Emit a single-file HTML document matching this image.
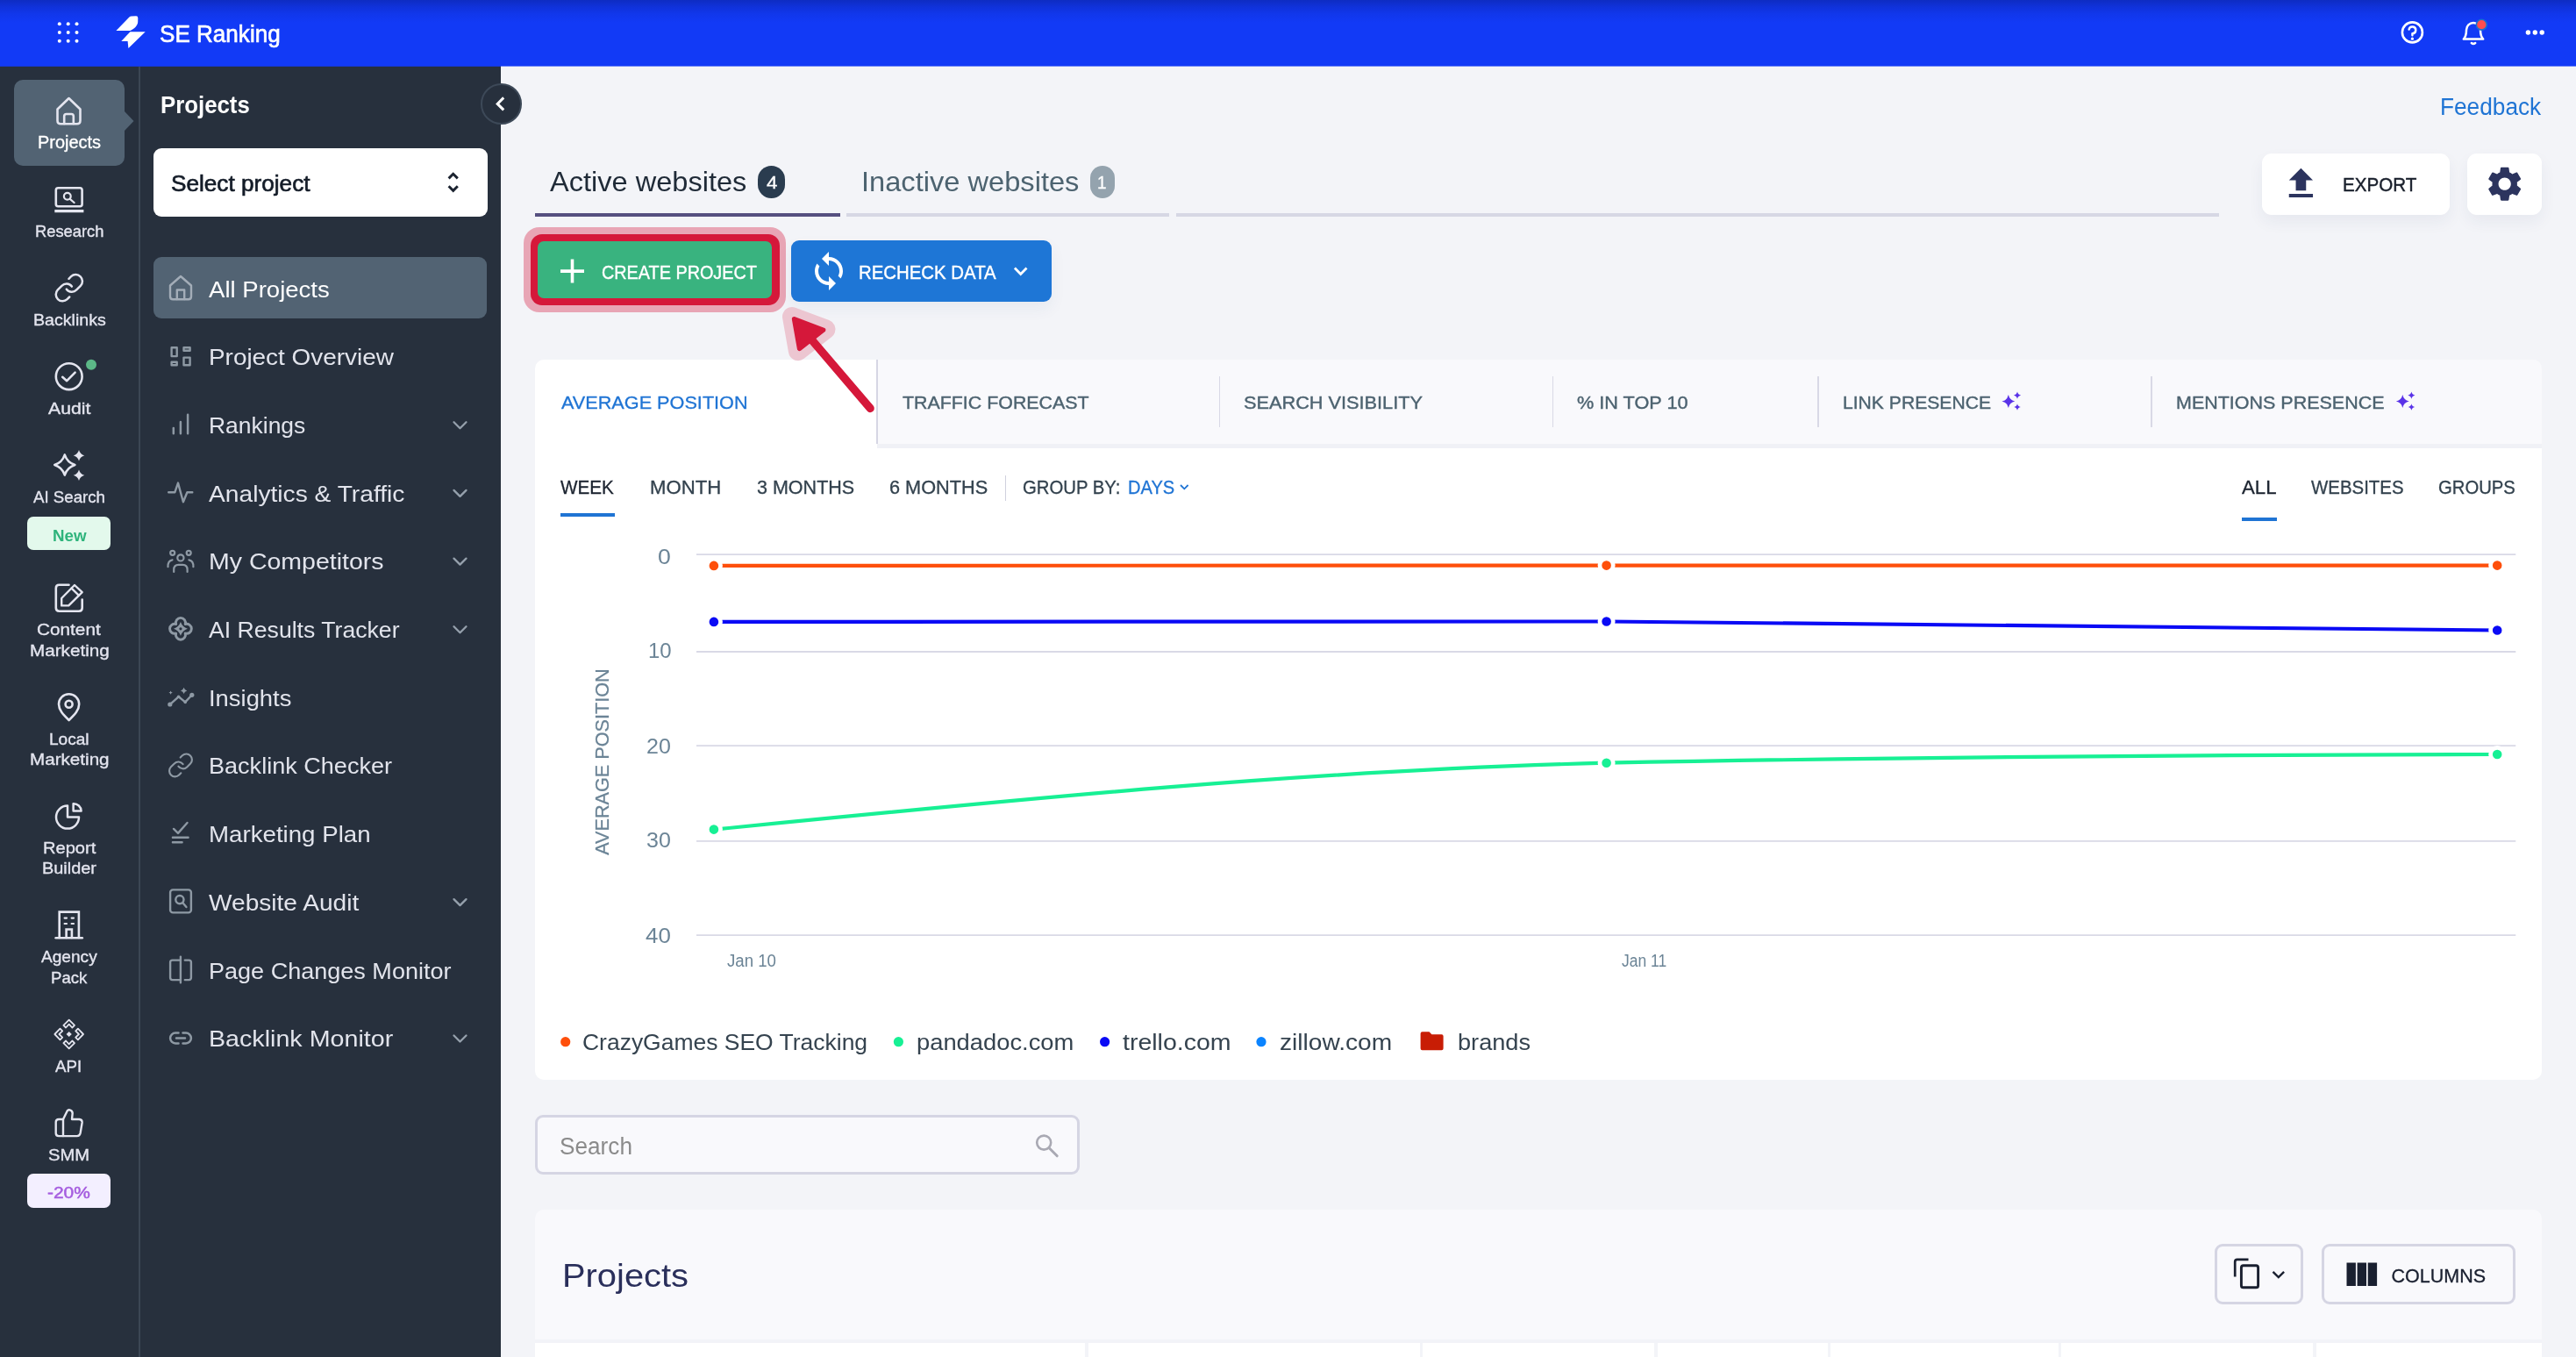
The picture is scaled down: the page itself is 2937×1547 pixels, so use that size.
<!DOCTYPE html><html><head><meta charset="utf-8"><title>SE Ranking - Projects</title><style>
html,body{margin:0;padding:0}body{width:2937px;height:1547px;position:relative;overflow:hidden;background:#f3f4f8;font-family:"Liberation Sans", sans-serif}
.t{position:absolute;white-space:nowrap;line-height:1;transform-origin:0 0}
#pg{position:absolute;left:0;top:0;width:100%;height:100%;will-change:transform}
</style></head><body><div id="pg">
<div style="position:absolute;left:0px;top:0px;width:2937px;height:75px;background:#123af6;border-radius:0px;background:linear-gradient(to bottom,#0e2cc2 0px,#1032da 8px,#1137eb 16px,#123af6 26px,#123af6 100%);"></div>
<div style="position:absolute;left:0px;top:75px;width:571px;height:1px;background:#1738d0;border-radius:0px;"></div>
<div style="position:absolute;left:571px;top:75px;width:2366px;height:1px;background:#6f86f6;border-radius:0px;"></div>
<svg style="position:absolute;left:0px;top:0px;" width="120" height="76" viewBox="0 0 120 76" fill="none"><circle cx="67.8" cy="27.3" r="2" fill="#fff"/><circle cx="67.8" cy="36.9" r="2" fill="#fff"/><circle cx="67.8" cy="46.8" r="2" fill="#fff"/><circle cx="77.7" cy="27.3" r="2" fill="#fff"/><circle cx="77.7" cy="36.9" r="2" fill="#fff"/><circle cx="77.7" cy="46.8" r="2" fill="#fff"/><circle cx="87.5" cy="27.3" r="2" fill="#fff"/><circle cx="87.5" cy="36.9" r="2" fill="#fff"/><circle cx="87.5" cy="46.8" r="2" fill="#fff"/></svg>
<svg style="position:absolute;left:0px;top:0px;" width="200" height="76" viewBox="0 0 200 76" fill="none"><path d="M132.4,34.9 L147.4,19.4 Q148.4,18.5 149.8,18.5 L155.2,18.3 Q157.3,18.3 157.3,20.4 L157.2,25 C157.2,29 152.6,33.6 148.4,34.9 Z" fill="#fff"/><path d="M165.7,36.2 L148.4,36.2 L138.3,46.9 L145.6,47.1 L146.4,54.9 Z" fill="#fff"/></svg>
<div style="position:absolute;left:0px;top:76px;width:571px;height:1471px;background:#27303d;border-radius:0px;"></div>
<div style="position:absolute;left:157.5px;top:76px;width:2px;height:1471px;background:#3b4654;border-radius:0px;"></div>
<div style="position:absolute;left:15.5px;top:91px;width:126.5px;height:97.5px;background:#526373;border-radius:10px;"></div>
<svg style="position:absolute;left:141px;top:126px;" width="14" height="24" viewBox="0 0 14 24" fill="none"><path d="M0,0 L11.5,12 L0,24 Z" fill="#526373"/></svg>
<svg style="position:absolute;left:0px;top:0px;" width="158" height="1547" viewBox="0 0 158 1547" fill="none"><g stroke="#e4e5ef" stroke-width="2.6" stroke-linecap="round" stroke-linejoin="round" fill="none" ><path d="M65.5,124.5 L78.5,112 L91.5,124.5 L91.5,137.5 Q91.5,141.3 87.7,141.3 L69.3,141.3 Q65.5,141.3 65.5,137.5 Z"/><path d="M73.2,141 L73.2,132.5 Q73.2,130 75.7,130 L81.3,130 Q83.8,130 83.8,132.5 L83.8,141"/></g><g stroke="#e4e5ef" stroke-width="2.6" stroke-linecap="round" stroke-linejoin="round" fill="none" ><rect x="63.8" y="214.3" width="29.8" height="21" rx="2.5"/><path d="M62.3,240.6 L95.4,240.6" stroke-width="3.2" stroke-linecap="butt"/></g><g stroke="#e4e5ef" stroke-width="2.2" stroke-linecap="round" stroke-linejoin="round" fill="none" ><circle cx="76.8" cy="223.8" r="3.9"/><path d="M79.8,226.9 L84.6,231"/></g><g transform="translate(60.6,309.9) scale(1.52)"><g stroke="#e4e5ef" stroke-width="1.65" stroke-linecap="round" stroke-linejoin="round" fill="none" ><path d="M10 13a5 5 0 0 0 7.54.54l3-3a5 5 0 0 0-7.07-7.07l-1.72 1.71"/><path d="M14 11a5 5 0 0 0-7.54-.54l-3 3a5 5 0 0 0 7.07 7.07l1.71-1.71"/></g></g><g stroke="#e4e5ef" stroke-width="2.6" stroke-linecap="round" stroke-linejoin="round" fill="none" ><circle cx="78.7" cy="429.2" r="14.9"/><path d="M71.2,429.8 L76.2,434.2 L85.6,424.6"/></g><circle cx="104" cy="415.7" r="6" fill="#5cb887"/><g stroke="#e4e5ef" stroke-width="2.5" stroke-linecap="round" stroke-linejoin="round" fill="none" ><path d="M73.8,518.4 Q76.584,527.216 85.39999999999999,530 Q76.584,532.784 73.8,541.6 Q71.01599999999999,532.784 62.199999999999996,530 Q71.01599999999999,527.216 73.8,518.4 Z"/></g><path d="M90,513.0 Q91.386,517.914 96.3,519.3 Q91.386,520.6859999999999 90,525.5999999999999 Q88.614,520.6859999999999 83.7,519.3 Q88.614,517.914 90,513.0 Z" fill="#e4e5ef"/><path d="M90,535.4000000000001 Q91.386,540.3140000000001 96.3,541.7 Q91.386,543.086 90,548.0 Q88.614,543.086 83.7,541.7 Q88.614,540.3140000000001 90,535.4000000000001 Z" fill="#e4e5ef"/><g stroke="#e4e5ef" stroke-width="2.6" stroke-linecap="round" stroke-linejoin="round" fill="none" ><path d="M78.5,666.8 L67.5,666.8 Q63.8,666.8 63.8,670.5 L63.8,693 Q63.8,696.7 67.5,696.7 L90,696.7 Q93.7,696.7 93.7,693 L93.7,683.5"/></g><g stroke="#e4e5ef" stroke-width="2.4" stroke-linecap="round" stroke-linejoin="round" fill="none" ><path d="M85,667 L93.7,675.2 L78.3,690.4 L70.2,690.4 L70.2,682 Z"/><path d="M81.5,670.6 L90,678.8"/></g><g stroke="#e4e5ef" stroke-width="2.6" stroke-linecap="round" stroke-linejoin="round" fill="none" ><path d="M78.6,821 C72,814.5 67,809.5 67,802.8 A11.6,11.6 0 0 1 90.2,802.8 C90.2,809.5 85.2,814.5 78.6,821 Z"/><circle cx="78.6" cy="802.7" r="4"/></g><g stroke="#e4e5ef" stroke-width="2.5" stroke-linecap="round" stroke-linejoin="round" fill="none" ><path d="M77,918.6 A13,13 0 1 0 90,931.6 L77,931.6 Z"/><path d="M83.6,916.2 A8.6,8.6 0 0 1 92.6,924.6 L83.6,924.6 Z"/></g><g stroke="#e4e5ef" stroke-width="2.6" stroke-linecap="round" stroke-linejoin="round" fill="none" ><path d="M67.7,1069 L67.7,1039.6 L89.9,1039.6 L89.9,1069" stroke-linejoin="miter"/><path d="M63.6,1069.3 L93.8,1069.3"/><path d="M75.6,1069 L75.6,1059.5 L81.9,1059.5 L81.9,1069" stroke-linejoin="miter"/></g><g stroke="#e4e5ef" stroke-width="2.2" stroke-linecap="round" stroke-linejoin="round" fill="none" ><path d="M73.6,1046.6 L76,1046.6 M81.6,1046.6 L84,1046.6 M73.6,1053 L76,1053 M81.6,1053 L84,1053"/></g><g stroke="#e4e5ef" stroke-width="1.8" stroke-linecap="round" stroke-linejoin="round" fill="none" stroke-linejoin="miter"><path transform="translate(78.7,1179) rotate(0)" d="M0,-16.3 L6.3,-10.2 L3.6,-7.5 L0,-11.3 L-3.6,-7.5 L-6.3,-10.2 Z"/><path transform="translate(78.7,1179) rotate(90)" d="M0,-16.3 L6.3,-10.2 L3.6,-7.5 L0,-11.3 L-3.6,-7.5 L-6.3,-10.2 Z"/><path transform="translate(78.7,1179) rotate(180)" d="M0,-16.3 L6.3,-10.2 L3.6,-7.5 L0,-11.3 L-3.6,-7.5 L-6.3,-10.2 Z"/><path transform="translate(78.7,1179) rotate(270)" d="M0,-16.3 L6.3,-10.2 L3.6,-7.5 L0,-11.3 L-3.6,-7.5 L-6.3,-10.2 Z"/></g><path d="M78.7,1175.9 L81.8,1179 L78.7,1182.1 L75.6,1179 Z" fill="#e4e5ef"/><g stroke="#e4e5ef" stroke-width="2.4" stroke-linecap="round" stroke-linejoin="round" fill="none" ><path d="M72,1276 L67,1276 Q63.7,1276 63.7,1279.3 L63.7,1291.8 Q63.7,1295.1 67,1295.1 L72,1295.1 Z"/><path d="M72,1276 L76.8,1266.2 Q77.8,1264.8 79.5,1265.3 Q83.2,1266.4 82.6,1270 L82,1276 L90.5,1276 Q94,1276.4 93.6,1280 L91.6,1291.8 Q90.9,1295.1 87.8,1295.1 L72,1295.1"/></g></svg>
<div style="position:absolute;left:31px;top:588.6px;width:95.1px;height:38.9px;background:#e3f9ec;border-radius:7px;"></div>
<div style="position:absolute;left:31.2px;top:1338.1px;width:94.9px;height:39px;background:#f3efff;border-radius:7px;"></div>
<div style="position:absolute;left:175px;top:169px;width:380.5px;height:78px;background:#ffffff;border-radius:9px;"></div>
<svg style="position:absolute;left:500px;top:190px;" width="32" height="36" viewBox="0 0 32 36" fill="none"><path d="M11.6,13.4 L16.7,8.3 L21.8,13.4 M11.6,22.3 L16.7,27.4 L21.8,22.3" stroke="#1b2330" stroke-width="2.9" fill="none"/></svg>
<div style="position:absolute;left:175.2px;top:293px;width:380.3px;height:70px;background:#526373;border-radius:9px;"></div>
<svg style="position:absolute;left:0px;top:0px;" width="571" height="1547" viewBox="0 0 571 1547" fill="none"><g stroke="#95a0ac" stroke-width="2.3" stroke-linecap="round" stroke-linejoin="round" fill="none" ><path d="M517.5,481.2 L524.5,488.2 L531.5,481.2"/></g><g stroke="#95a0ac" stroke-width="2.3" stroke-linecap="round" stroke-linejoin="round" fill="none" ><path d="M517.5,558.9000000000001 L524.5,565.9000000000001 L531.5,558.9000000000001"/></g><g stroke="#95a0ac" stroke-width="2.3" stroke-linecap="round" stroke-linejoin="round" fill="none" ><path d="M517.5,636.6000000000001 L524.5,643.6000000000001 L531.5,636.6000000000001"/></g><g stroke="#95a0ac" stroke-width="2.3" stroke-linecap="round" stroke-linejoin="round" fill="none" ><path d="M517.5,714.3000000000001 L524.5,721.3000000000001 L531.5,714.3000000000001"/></g><g stroke="#95a0ac" stroke-width="2.3" stroke-linecap="round" stroke-linejoin="round" fill="none" ><path d="M517.5,1025.1000000000001 L524.5,1032.1000000000001 L531.5,1025.1000000000001"/></g><g stroke="#95a0ac" stroke-width="2.3" stroke-linecap="round" stroke-linejoin="round" fill="none" ><path d="M517.5,1180.5000000000002 L524.5,1187.5000000000002 L531.5,1180.5000000000002"/></g><g stroke="#a3adb8" stroke-width="2.4" stroke-linecap="round" stroke-linejoin="round" fill="none" ><path d="M194,325.5 L206,315 L218,325.5 L218,338 Q218,341.3 214.7,341.3 L197.3,341.3 Q194,341.3 194,338 Z"/><path d="M201.8,341 L201.8,330.5 L210.2,330.5 L210.2,341"/></g><g stroke="#8e99a4" stroke-width="2.4" stroke-linecap="round" stroke-linejoin="round" fill="none" stroke-linejoin="miter"><rect x="195.6" y="396.2" width="6.1" height="9.9"/><rect x="209.5" y="396.2" width="7.1" height="3.5"/><rect x="195.6" y="412.7" width="6.1" height="3.6"/><rect x="209.5" y="407.6" width="7.1" height="8.7"/></g><g stroke="#8e99a4" stroke-width="2.5" stroke-linecap="round" stroke-linejoin="round" fill="none" ><path d="M197.8,494.3 L197.8,488 M205.9,494.3 L205.9,481 M214.1,494.3 L214.1,472.8"/></g><g stroke="#8e99a4" stroke-width="2.4" stroke-linecap="round" stroke-linejoin="round" fill="none" ><path d="M192.2,561.3 L199.3,561.3 L203,550.6 L208.9,572.2 L213.4,561.3 L219.3,561.3"/></g><g stroke="#8e99a4" stroke-width="2.2" stroke-linecap="round" stroke-linejoin="round" fill="none" ><circle cx="205.9" cy="635.9" r="3.6"/><path d="M198.2,652 L198.2,649.5 Q198.2,643.8 203.5,643.8 L208.3,643.8 Q213.6,643.8 213.6,649.5 L213.6,652"/><circle cx="196.7" cy="630.3" r="2.5"/><circle cx="215.2" cy="630.3" r="2.5"/><path d="M191.5,646.2 Q191.2,639.2 196.5,638.3 M220.4,646.2 Q220.7,639.2 215.4,638.3"/></g><g stroke="#8e99a4" stroke-width="2.9" stroke-linecap="round" stroke-linejoin="round" fill="none" ><path d="M200.70499999999998,711.555 A5.5,5.5 0 1 1 211.195,711.555 A5.5,5.5 0 1 1 211.195,722.045 A5.5,5.5 0 1 1 200.70499999999998,722.045 A5.5,5.5 0 1 1 200.70499999999998,711.555 Z"/></g><path d="M205.95,708.9 Q208.083,714.6669999999999 213.85,716.8 Q208.083,718.933 205.95,724.6999999999999 Q203.81699999999998,718.933 198.04999999999998,716.8 Q203.81699999999998,714.6669999999999 205.95,708.9 Z" fill="#8e99a4"/><circle cx="205.95" cy="716.8" r="1.6" fill="#27303d"/><g stroke="#8e99a4" stroke-width="2.4" stroke-linecap="round" stroke-linejoin="round" fill="none" ><path d="M194,802.8 L203.6,794.3 L211.2,800.4 L218.6,792.5"/></g><circle cx="193.8" cy="803" r="2.6" fill="#8e99a4"/><circle cx="218.8" cy="792.3" r="2.6" fill="#8e99a4"/><circle cx="203.6" cy="794.3" r="1.8" fill="#8e99a4"/><circle cx="211.2" cy="800.4" r="1.8" fill="#8e99a4"/><path d="M209.6,783.8 Q210.32,786.68 213.2,787.4 Q210.32,788.12 209.6,791.0 Q208.88,788.12 206.0,787.4 Q208.88,786.68 209.6,783.8 Z" fill="#8e99a4"/><path d="M194.6,787.4 Q195.04,789.16 196.79999999999998,789.6 Q195.04,790.0400000000001 194.6,791.8000000000001 Q194.16,790.0400000000001 192.4,789.6 Q194.16,789.16 194.6,787.4 Z" fill="#8e99a4"/><g transform="translate(190.4,856.8) scale(1.3)"><g stroke="#8e99a4" stroke-width="1.65" stroke-linecap="round" stroke-linejoin="round" fill="none" ><path d="M10 13a5 5 0 0 0 7.54.54l3-3a5 5 0 0 0-7.07-7.07l-1.72 1.71"/><path d="M14 11a5 5 0 0 0-7.54-.54l-3 3a5 5 0 0 0 7.07 7.07l1.71-1.71"/></g></g><g stroke="#8e99a4" stroke-width="2.4" stroke-linecap="round" stroke-linejoin="round" fill="none" ><path d="M198,944.9 L203,949.9 L213.5,938"/><path d="M196.9,954.8 L214.6,954.8 M196.9,960.3 L207.6,960.3"/></g><g stroke="#8e99a4" stroke-width="2.4" stroke-linecap="round" stroke-linejoin="round" fill="none" ><rect x="194.1" y="1014.4" width="23.8" height="26" rx="3"/><circle cx="204.9" cy="1025.6" r="4.6"/><path d="M208.4,1029.3 L212.4,1034"/></g><g stroke="#8e99a4" stroke-width="2.4" stroke-linecap="round" stroke-linejoin="round" fill="none" ><path d="M205.9,1094.6 L196.6,1094.6 Q194.1,1094.6 194.1,1097.1 L194.1,1114.6 Q194.1,1117.1 196.6,1117.1 L205.9,1117.1 M205.9,1090.6 L205.9,1120.2 M210.8,1094.6 L215.4,1094.6 Q217.9,1094.6 217.9,1097.1 L217.9,1114.6 Q217.9,1117.1 215.4,1117.1 L210.8,1117.1"/></g><g stroke="#8e99a4" stroke-width="2.5" stroke-linecap="round" stroke-linejoin="round" fill="none" ><path d="M203.5,1177.6 L200,1177.6 A5.9,5.9 0 0 0 200,1189.4 L203.5,1189.4 M208.5,1177.6 L212,1177.6 A5.9,5.9 0 0 1 212,1189.4 L208.5,1189.4 M201,1183.5 L211,1183.5"/></g></svg>
<div style="position:absolute;left:548px;top:95px;width:42.7px;height:42.7px;border-radius:50%;background:#27303d;border:2px solid #3d4958;"></div>
<svg style="position:absolute;left:0px;top:0px;" width="620" height="160" viewBox="0 0 620 160" fill="none"><path d="M574.2,111.4 L567.2,118.4 L574.2,125.4" stroke="#fff" stroke-width="3" fill="none"/></svg>
<div style="position:absolute;left:864.2px;top:188.5px;width:31.2px;height:37.3px;background:#2a3c4f;border-radius:15.6px;"></div>
<div style="position:absolute;left:1243.2px;top:188.5px;width:28.2px;height:37.3px;background:#94a3ae;border-radius:14.1px;"></div>
<div style="position:absolute;left:609.7px;top:242.6px;width:347.9px;height:4.2px;background:#565080;border-radius:0px;"></div>
<div style="position:absolute;left:965px;top:242.6px;width:368px;height:4.2px;background:#d6d7e4;border-radius:0px;"></div>
<div style="position:absolute;left:1341px;top:242.6px;width:1189px;height:4.2px;background:#d6d7e4;border-radius:0px;"></div>
<div style="position:absolute;left:2578.7px;top:175px;width:214.3px;height:70px;background:#ffffff;border-radius:11px;box-shadow:0 8px 18px rgba(40,50,100,0.06);"></div>
<svg style="position:absolute;left:2599.8px;top:186.2px;" width="46.8" height="46.8" viewBox="0 0 24 24" fill="none"><path d="M9 16h6v-6h4l-7-7-7 7h4zm-4 2h14v2H5z" fill="#2c345e"/></svg>
<div style="position:absolute;left:2812.6px;top:175px;width:85px;height:70px;background:#ffffff;border-radius:11px;box-shadow:0 8px 18px rgba(40,50,100,0.06);"></div>
<svg style="position:absolute;left:2831.7px;top:186.0px;" width="47.4" height="47.4" viewBox="0 0 24 24" fill="none"><path d="M19.14,12.94c0.04-0.3,0.06-0.61,0.06-0.94c0-0.32-0.02-0.64-0.07-0.94l2.03-1.58c0.18-0.14,0.23-0.41,0.12-0.61 l-1.92-3.32c-0.12-0.22-0.37-0.29-0.59-0.22l-2.39,0.96c-0.5-0.38-1.03-0.7-1.62-0.94L14.4,2.81c-0.04-0.24-0.24-0.41-0.48-0.41 h-3.84c-0.24,0-0.43,0.17-0.47,0.41L9.25,5.35C8.66,5.59,8.12,5.92,7.63,6.29L5.24,5.33c-0.22-0.08-0.47,0-0.59,0.22L2.74,8.87 C2.62,9.08,2.66,9.34,2.86,9.48l2.03,1.58C4.84,11.36,4.8,11.69,4.8,12s0.02,0.64,0.07,0.94l-2.03,1.58 c-0.18,0.14-0.23,0.41-0.12,0.61l1.92,3.32c0.12,0.22,0.37,0.29,0.59,0.22l2.39-0.96c0.5,0.38,1.03,0.7,1.62,0.94l0.36,2.54 c0.05,0.24,0.24,0.41,0.48,0.41h3.84c0.24,0,0.44-0.17,0.47-0.41l0.36-2.54c0.59-0.24,1.13-0.56,1.62-0.94l2.39,0.96 c0.22,0.08,0.47,0,0.59-0.22l1.92-3.32c0.12-0.22,0.07-0.47-0.12-0.61L19.14,12.94z M12,15.6c-1.98,0-3.6-1.62-3.6-3.6 s1.62-3.6,3.6-3.6s3.6,1.62,3.6,3.6S13.98,15.6,12,15.6z" fill="#2c345e"/></svg>
<div style="position:absolute;left:596.9px;top:258.6px;width:299.1px;height:97.7px;background:#e8a5b5;border-radius:18px;"></div>
<div style="position:absolute;left:604.8px;top:266.8px;width:283.8px;height:81.5px;background:#d5183a;border-radius:13px;"></div>
<div style="position:absolute;left:613px;top:275px;width:267.1px;height:65.1px;background:#39b37f;border-radius:7px;"></div>
<svg style="position:absolute;left:632px;top:289px;" width="40" height="40" viewBox="0 0 40 40" fill="none"><path d="M20.5,6.6 L20.5,33.6 M7,20.1 L34,20.1" stroke="#fff" stroke-width="3.6"/></svg>
<div style="position:absolute;left:902.2px;top:274px;width:296.4px;height:69.9px;background:#1e76d6;border-radius:9px;box-shadow:0 8px 18px rgba(30,60,120,0.06);"></div>
<svg style="position:absolute;left:920.8px;top:285.2px;" width="48" height="48" viewBox="0 0 24 24" fill="none"><path d="M12 4V1L8 5l4 4V6c3.31 0 6 2.69 6 6 0 1.01-.25 1.97-.7 2.8l1.46 1.46C19.54 15.03 20 13.57 20 12c0-4.42-3.58-8-8-8zm0 14c-3.31 0-6-2.69-6-6 0-1.01.25-1.97.7-2.8L5.24 7.74C4.46 8.97 4 10.43 4 12c0 4.42 3.58 8 8 8v3l4-4-4-4v3z" fill="#fff"/></svg>
<svg style="position:absolute;left:1150px;top:296px;" width="28" height="26" viewBox="0 0 28 26" fill="none"><path d="M6.9,9.6 L13.7,16.6 L20.5,9.6" stroke="#fff" stroke-width="2.8" fill="none"/></svg>
<div style="position:absolute;left:609.8px;top:409.7px;width:2288px;height:821px;background:#ffffff;border-radius:10px;"></div>
<div style="position:absolute;left:1000.4px;top:409.7px;width:1897.4px;height:101px;background:#f0f1f6;border-radius:0px;border-radius:0 10px 0 0;"></div>
<div style="position:absolute;left:1000.4px;top:409.7px;width:1897.4px;height:96.8px;background:#f9f9fc;border-radius:0px;border-radius:0 10px 0 0;"></div>
<div style="position:absolute;left:999.4px;top:409.7px;width:2px;height:96.8px;background:#d6d6e4;border-radius:0px;"></div>
<div style="position:absolute;left:1389.5px;top:429.3px;width:1.6px;height:58.2px;background:#d9d9e6;border-radius:0px;"></div>
<div style="position:absolute;left:1769.5px;top:429.3px;width:1.6px;height:58.2px;background:#d9d9e6;border-radius:0px;"></div>
<div style="position:absolute;left:2072.0px;top:429.3px;width:1.6px;height:58.2px;background:#d9d9e6;border-radius:0px;"></div>
<div style="position:absolute;left:2452.3999999999996px;top:429.3px;width:1.6px;height:58.2px;background:#d9d9e6;border-radius:0px;"></div>
<svg style="position:absolute;left:0px;top:0px;pointer-events:none;" width="2937" height="520" viewBox="0 0 2937 520" fill="none"><path d="M2289.9,450.1 Q2291.158,456.242 2297.3,457.5 Q2291.158,458.758 2289.9,464.9 Q2288.6420000000003,458.758 2282.5,457.5 Q2288.6420000000003,456.242 2289.9,450.1 Z" fill="#5a33e8"/><path d="M2300.0,446.59999999999997 Q2300.697,450.003 2304.1,450.7 Q2300.697,451.397 2300.0,454.8 Q2299.303,451.397 2295.9,450.7 Q2299.303,450.003 2300.0,446.59999999999997 Z" fill="#5a33e8"/><path d="M2300.0,460.2 Q2300.646,463.354 2303.8,464.0 Q2300.646,464.646 2300.0,467.8 Q2299.354,464.646 2296.2,464.0 Q2299.354,463.354 2300.0,460.2 Z" fill="#5a33e8"/></svg>
<svg style="position:absolute;left:0px;top:0px;pointer-events:none;" width="2937" height="520" viewBox="0 0 2937 520" fill="none"><path d="M2739.3,450.1 Q2740.558,456.242 2746.7000000000003,457.5 Q2740.558,458.758 2739.3,464.9 Q2738.0420000000004,458.758 2731.9,457.5 Q2738.0420000000004,456.242 2739.3,450.1 Z" fill="#5a33e8"/><path d="M2749.4,446.59999999999997 Q2750.097,450.003 2753.5,450.7 Q2750.097,451.397 2749.4,454.8 Q2748.703,451.397 2745.3,450.7 Q2748.703,450.003 2749.4,446.59999999999997 Z" fill="#5a33e8"/><path d="M2749.4,460.2 Q2750.0460000000003,463.354 2753.2000000000003,464.0 Q2750.0460000000003,464.646 2749.4,467.8 Q2748.754,464.646 2745.6,464.0 Q2748.754,463.354 2749.4,460.2 Z" fill="#5a33e8"/></svg>
<div style="position:absolute;left:639.1px;top:584.5px;width:62px;height:4.2px;background:#1f74d4;border-radius:0px;"></div>
<div style="position:absolute;left:1145.8px;top:542px;width:1.6px;height:28.6px;background:#d0d1de;border-radius:0px;"></div>
<svg style="position:absolute;left:1341px;top:545px;" width="20" height="20" viewBox="0 0 20 20" fill="none"><path d="M5,8 L9.3,12.3 L13.6,8" stroke="#1f74d4" stroke-width="1.8" fill="none"/></svg>
<div style="position:absolute;left:2556px;top:589.8px;width:39.5px;height:4.4px;background:#1f74d4;border-radius:0px;"></div>
<svg style="position:absolute;left:0px;top:0px;pointer-events:none;" width="2937" height="1547" viewBox="0 0 2937 1547" fill="none"><path d="M794,632.2 L2868.3,632.2" stroke="#d9d9e6" stroke-width="1.8"/><path d="M794,743 L2868.3,743" stroke="#d9d9e6" stroke-width="1.8"/><path d="M794,850.2 L2868.3,850.2" stroke="#d9d9e6" stroke-width="1.8"/><path d="M794,958.8 L2868.3,958.8" stroke="#d9d9e6" stroke-width="1.8"/><path d="M794,1066.2 L2868.3,1066.2" stroke="#d9d9e6" stroke-width="1.8"/><path d="M813.9,644.9 L1831.6,644.6 L2847.2,644.6" stroke="#fe4f0b" stroke-width="4.2" fill="none"/><circle cx="813.9" cy="644.9" r="7.65" fill="#fe4f0b" stroke="#fff" stroke-width="4.7"/><circle cx="1831.6" cy="644.6" r="7.65" fill="#fe4f0b" stroke="#fff" stroke-width="4.7"/><circle cx="2847.2" cy="644.6" r="7.65" fill="#fe4f0b" stroke="#fff" stroke-width="4.7"/><path d="M813.9,708.9 L1831.6,708.5 L2847.2,718.5" stroke="#0a0af5" stroke-width="4.2" fill="none"/><circle cx="813.9" cy="708.9" r="7.65" fill="#0a0af5" stroke="#fff" stroke-width="4.7"/><circle cx="1831.6" cy="708.5" r="7.65" fill="#0a0af5" stroke="#fff" stroke-width="4.7"/><circle cx="2847.2" cy="718.5" r="7.65" fill="#0a0af5" stroke="#fff" stroke-width="4.7"/><path d="M813.9,945.6 C1153.9,912 1491.6,878 1831.6,869.7 C2171.6,863 2507.2,860.5 2847.2,860" stroke="#17f094" stroke-width="4.2" fill="none"/><circle cx="813.9" cy="945.6" r="7.65" fill="#17f094" stroke="#fff" stroke-width="4.7"/><circle cx="1831.6" cy="869.7" r="7.65" fill="#17f094" stroke="#fff" stroke-width="4.7"/><circle cx="2847.2" cy="860" r="7.65" fill="#17f094" stroke="#fff" stroke-width="4.7"/></svg>
<svg style="position:absolute;left:0px;top:0px;pointer-events:none;" width="2937" height="1547" viewBox="0 0 2937 1547" fill="none"><circle cx="644.7" cy="1187.7" r="5.6" fill="#fe4f0b"/><circle cx="1024.4" cy="1187.7" r="5.6" fill="#17f094"/><circle cx="1259.6" cy="1187.7" r="5.6" fill="#0a0af5"/><circle cx="1438" cy="1187.7" r="5.6" fill="#0b84ff"/><path d="M1619.6,1178.2 Q1619.6,1176.2 1621.6,1176.2 L1629.5,1176.2 L1632.4,1179.3 L1643.6,1179.3 Q1645.6,1179.3 1645.6,1181.3 L1645.6,1195.3 Q1645.6,1197.3 1643.6,1197.3 L1621.6,1197.3 Q1619.6,1197.3 1619.6,1195.3 Z" fill="#c81d05"/></svg>
<div style="position:absolute;left:610px;top:1271px;width:615px;height:62px;border:3px solid #d5d5e3;border-radius:9px;background:#f9f9fc;"></div>
<svg style="position:absolute;left:1176px;top:1288px;" width="36" height="36" viewBox="0 0 36 36" fill="none"><circle cx="14.2" cy="14.6" r="8" stroke="#a9a9b3" stroke-width="2.6"/><path d="M20.2,20.8 L29.2,29.8" stroke="#a9a9b3" stroke-width="3" stroke-linecap="round"/></svg>
<div style="position:absolute;left:609.8px;top:1379px;width:2288px;height:200px;background:#f9f9fc;border-radius:10px;"></div>
<div style="position:absolute;left:609.8px;top:1527px;width:2288px;height:4px;background:#f2f3f8;border-radius:0px;"></div>
<div style="position:absolute;left:609.8px;top:1530.5px;width:2288px;height:20px;background:#ffffff;border-radius:0px;"></div>
<div style="position:absolute;left:1237.3999999999999px;top:1530.5px;width:3.8px;height:20px;background:#f3f4f8;border-radius:0px;"></div>
<div style="position:absolute;left:1618.5px;top:1530.5px;width:3.8px;height:20px;background:#f3f4f8;border-radius:0px;"></div>
<div style="position:absolute;left:1886.1999999999998px;top:1530.5px;width:3.8px;height:20px;background:#f3f4f8;border-radius:0px;"></div>
<div style="position:absolute;left:2083.6px;top:1530.5px;width:3.8px;height:20px;background:#f3f4f8;border-radius:0px;"></div>
<div style="position:absolute;left:2346.6px;top:1530.5px;width:3.8px;height:20px;background:#f3f4f8;border-radius:0px;"></div>
<div style="position:absolute;left:2637.2px;top:1530.5px;width:3.8px;height:20px;background:#f3f4f8;border-radius:0px;"></div>
<div style="position:absolute;left:2524.7px;top:1418px;width:95.3px;height:63px;border:3px solid #d5d5e3;border-radius:9px;background:#f9f9fc;"></div>
<div style="position:absolute;left:2647px;top:1418px;width:215px;height:63px;border:3px solid #d5d5e3;border-radius:9px;background:#f9f9fc;"></div>
<svg style="position:absolute;left:2540px;top:1430px;" width="44" height="44" viewBox="0 0 44 44" fill="none"><path d="M8.2,25.5 L8.2,8.5 Q8.2,5.8 10.9,5.8 L23.5,5.8" stroke="#1a2030" stroke-width="2.7" fill="none"/><rect x="15.4" y="12.8" width="19.2" height="25" rx="2.4" stroke="#1a2030" stroke-width="2.9" fill="none"/></svg>
<svg style="position:absolute;left:2585px;top:1440px;" width="26" height="26" viewBox="0 0 26 26" fill="none"><path d="M6.5,9.8 L12.8,16.1 L19.1,9.8" stroke="#1a2030" stroke-width="2.4" fill="none"/></svg>
<svg style="position:absolute;left:2672px;top:1434px;" width="44" height="36" viewBox="0 0 44 36" fill="none"><rect x="3.5" y="5.5" width="10.4" height="26.5" fill="#1a2030"/><rect x="15.6" y="5.5" width="10.4" height="26.5" fill="#1a2030"/><rect x="27.7" y="5.5" width="10.4" height="26.5" fill="#1a2030"/></svg>
<svg style="position:absolute;left:0px;top:0px;" width="2937" height="76" viewBox="0 0 2937 76" fill="none"><g stroke="#ffffff" stroke-width="2.6" stroke-linecap="round" stroke-linejoin="round" fill="none" ><circle cx="2750.4" cy="36.9" r="11.5"/></g><g stroke="#ffffff" stroke-width="2.4" stroke-linecap="round" stroke-linejoin="round" fill="none" ><path d="M2746.6,33.5 A3.9,3.9 0 1 1 2750.4,38.3 L2750.4,40.3"/></g><circle cx="2750.4" cy="44.2" r="1.6" fill="#fff"/><g stroke="#ffffff" stroke-width="2.5" stroke-linecap="round" stroke-linejoin="round" fill="none" ><path d="M2808.8,44.6 L2831.2,44.6 C2828.2,41.6 2828,38.5 2828,34 A8,8 0 0 0 2812,34 C2812,38.5 2811.8,41.6 2808.8,44.6 Z"/><path d="M2817.8,49 Q2820,50.8 2822.2,49"/></g><circle cx="2829.3" cy="28.2" r="5.9" fill="#ff4d4f" stroke="#1b6fcb" stroke-width="1.6"/><circle cx="2882.4" cy="37" r="2.7" fill="#fff"/><circle cx="2890.3" cy="37" r="2.7" fill="#fff"/><circle cx="2898.2" cy="37" r="2.7" fill="#fff"/></svg>
<svg style="position:absolute;left:0px;top:0px;pointer-events:none;" width="2937" height="1547" viewBox="0 0 2937 1547" fill="none"><path d="M903,361 L941.5,375.4 L909.9,400.2 Z" fill="#ecc6d1" stroke="#ecc6d1" stroke-width="22" stroke-linejoin="round"/><path d="M926,388 L992.2,465.6" stroke="#d5183a" stroke-width="9.2" stroke-linecap="round"/><path d="M905.6,363.8 L938.6,376.2 L911.6,397.4 Z" fill="#d5183a" stroke="#d5183a" stroke-width="5.5" stroke-linejoin="round"/></svg>
<div class="t" id="t0" style="left:181.80px;top:26.00px;font-size:26.8px;color:#fff;-webkit-text-stroke:0.65px #fff;transform:scaleX(0.9730);">SE Ranking</div>
<div class="t" id="t1" style="left:42.70px;top:153.00px;font-size:19.5px;color:#ffffff;-webkit-text-stroke:0.35px #ffffff;transform:scaleX(1.0205);">Projects</div>
<div class="t" id="t2" style="left:39.50px;top:254.00px;font-size:19px;color:#e4e5ef;-webkit-text-stroke:0.35px #e4e5ef;transform:scaleX(0.9652);">Research</div>
<div class="t" id="t3" style="left:37.70px;top:355.00px;font-size:19px;color:#e4e5ef;-webkit-text-stroke:0.35px #e4e5ef;transform:scaleX(1.0318);">Backlinks</div>
<div class="t" id="t4" style="left:54.60px;top:456.00px;font-size:19px;color:#e4e5ef;-webkit-text-stroke:0.35px #e4e5ef;transform:scaleX(1.1152);">Audit</div>
<div class="t" id="t5" style="left:38.00px;top:557.00px;font-size:19px;color:#e4e5ef;-webkit-text-stroke:0.35px #e4e5ef;transform:scaleX(0.9828);">AI Search</div>
<div class="t" id="t6" style="left:59.50px;top:602.00px;font-size:18.5px;color:#2fb47c;font-weight:700;transform:scaleX(1.0145);">New</div>
<div class="t" id="t7" style="left:42.40px;top:708.00px;font-size:19px;color:#e4e5ef;-webkit-text-stroke:0.35px #e4e5ef;transform:scaleX(1.0925);">Content</div>
<div class="t" id="t8" style="left:33.60px;top:732.00px;font-size:19px;color:#e4e5ef;-webkit-text-stroke:0.35px #e4e5ef;transform:scaleX(1.0884);">Marketing</div>
<div class="t" id="t9" style="left:55.80px;top:833.00px;font-size:19px;color:#e4e5ef;-webkit-text-stroke:0.35px #e4e5ef;transform:scaleX(1.0039);">Local</div>
<div class="t" id="t10" style="left:33.80px;top:856.00px;font-size:19px;color:#e4e5ef;-webkit-text-stroke:0.35px #e4e5ef;transform:scaleX(1.0860);">Marketing</div>
<div class="t" id="t11" style="left:48.70px;top:957.00px;font-size:19px;color:#e4e5ef;-webkit-text-stroke:0.35px #e4e5ef;transform:scaleX(1.0573);">Report</div>
<div class="t" id="t12" style="left:48.00px;top:980.00px;font-size:19px;color:#e4e5ef;-webkit-text-stroke:0.35px #e4e5ef;transform:scaleX(1.0464);">Builder</div>
<div class="t" id="t13" style="left:46.90px;top:1081.00px;font-size:19px;color:#e4e5ef;-webkit-text-stroke:0.35px #e4e5ef;transform:scaleX(1.0051);">Agency</div>
<div class="t" id="t14" style="left:58.00px;top:1105.00px;font-size:19px;color:#e4e5ef;-webkit-text-stroke:0.35px #e4e5ef;transform:scaleX(0.9775);">Pack</div>
<div class="t" id="t15" style="left:63.40px;top:1206.00px;font-size:19px;color:#e4e5ef;-webkit-text-stroke:0.35px #e4e5ef;transform:scaleX(0.9829);">API</div>
<div class="t" id="t16" style="left:55.10px;top:1307.00px;font-size:19px;color:#e4e5ef;-webkit-text-stroke:0.35px #e4e5ef;transform:scaleX(1.0625);">SMM</div>
<div class="t" id="t17" style="left:54.20px;top:1351.00px;font-size:18.7px;color:#a55ddf;-webkit-text-stroke:0.5px #a55ddf;transform:scaleX(1.1205);">-20%</div>
<div class="t" id="t18" style="left:183.20px;top:107.00px;font-size:26.8px;color:#ffffff;font-weight:700;transform:scaleX(0.9626);">Projects</div>
<div class="t" id="t19" style="left:194.70px;top:197.00px;font-size:25.5px;color:#141c28;-webkit-text-stroke:0.65px #141c28;transform:scaleX(1.0259);">Select project</div>
<div class="t" id="t20" style="left:238.00px;top:317.00px;font-size:26.2px;color:#ffffff;transform:scaleX(1.0520);">All Projects</div>
<div class="t" id="t21" style="left:238.00px;top:394.00px;font-size:26.2px;color:#e2e4ec;transform:scaleX(1.0651);">Project Overview</div>
<div class="t" id="t22" style="left:238.00px;top:472.00px;font-size:26.2px;color:#e2e4ec;transform:scaleX(1.0102);">Rankings</div>
<div class="t" id="t23" style="left:238.00px;top:550.00px;font-size:26.2px;color:#e2e4ec;transform:scaleX(1.0759);">Analytics &amp; Traffic</div>
<div class="t" id="t24" style="left:238.00px;top:627.00px;font-size:26.2px;color:#e2e4ec;transform:scaleX(1.0880);">My Competitors</div>
<div class="t" id="t25" style="left:238.00px;top:705.00px;font-size:26.2px;color:#e2e4ec;transform:scaleX(1.0167);">AI Results Tracker</div>
<div class="t" id="t26" style="left:238.00px;top:783.00px;font-size:26.2px;color:#e2e4ec;transform:scaleX(1.0460);">Insights</div>
<div class="t" id="t27" style="left:238.00px;top:860.00px;font-size:26.2px;color:#e2e4ec;transform:scaleX(1.0331);">Backlink Checker</div>
<div class="t" id="t28" style="left:238.00px;top:938.00px;font-size:26.2px;color:#e2e4ec;transform:scaleX(1.0568);">Marketing Plan</div>
<div class="t" id="t29" style="left:238.00px;top:1016.00px;font-size:26.2px;color:#e2e4ec;transform:scaleX(1.0729);">Website Audit</div>
<div class="t" id="t30" style="left:238.00px;top:1094.00px;font-size:26.2px;color:#e2e4ec;transform:scaleX(1.0323);">Page Changes Monitor</div>
<div class="t" id="t31" style="left:238.00px;top:1171.00px;font-size:26.2px;color:#e2e4ec;transform:scaleX(1.0941);">Backlink Monitor</div>
<div class="t" id="t32" style="left:2781.60px;top:109.00px;font-size:27px;color:#1f74d4;transform:scaleX(0.9715);">Feedback</div>
<div class="t" id="t33" style="left:626.80px;top:192.00px;font-size:30.5px;color:#1f2a37;transform:scaleX(1.0671);">Active websites</div>
<div class="t" id="t34" style="left:873.65px;top:198.00px;font-size:20.5px;color:#ffffff;-webkit-text-stroke:0.3px #ffffff;transform:scaleX(1.0959);">4</div>
<div class="t" id="t35" style="left:982.00px;top:192.00px;font-size:30.5px;color:#4d6370;transform:scaleX(1.0695);">Inactive websites</div>
<div class="t" id="t36" style="left:1251.35px;top:198.00px;font-size:20.5px;color:#ffffff;-webkit-text-stroke:0.3px #ffffff;transform:scaleX(0.9205);">1</div>
<div class="t" id="t37" style="left:2671.20px;top:200.00px;font-size:22px;color:#1a202c;-webkit-text-stroke:0.45px #1a202c;transform:scaleX(0.9360);">EXPORT</div>
<div class="t" id="t38" style="left:686.30px;top:301.00px;font-size:21.5px;color:#ffffff;-webkit-text-stroke:0.4px #ffffff;transform:scaleX(0.9217);">CREATE PROJECT</div>
<div class="t" id="t39" style="left:979.30px;top:301.00px;font-size:21.5px;color:#ffffff;-webkit-text-stroke:0.4px #ffffff;transform:scaleX(0.9483);">RECHECK DATA</div>
<div class="t" id="t40" style="left:639.90px;top:448.00px;font-size:21px;color:#1f74d4;-webkit-text-stroke:0.3px #1f74d4;transform:scaleX(1.0313);">AVERAGE POSITION</div>
<div class="t" id="t41" style="left:1029.00px;top:448.00px;font-size:21px;color:#4d6370;-webkit-text-stroke:0.4px #4d6370;transform:scaleX(1.0180);">TRAFFIC FORECAST</div>
<div class="t" id="t42" style="left:1418.30px;top:448.00px;font-size:21px;color:#4d6370;-webkit-text-stroke:0.4px #4d6370;transform:scaleX(1.0343);">SEARCH VISIBILITY</div>
<div class="t" id="t43" style="left:1798.30px;top:448.00px;font-size:21px;color:#4d6370;-webkit-text-stroke:0.4px #4d6370;transform:scaleX(1.0320);">% IN TOP 10</div>
<div class="t" id="t44" style="left:2101.00px;top:448.00px;font-size:21px;color:#4d6370;-webkit-text-stroke:0.4px #4d6370;transform:scaleX(1.0056);">LINK PRESENCE</div>
<div class="t" id="t45" style="left:2481.30px;top:448.00px;font-size:21px;color:#4d6370;-webkit-text-stroke:0.4px #4d6370;transform:scaleX(1.0228);">MENTIONS PRESENCE</div>
<div class="t" id="t46" style="left:639.40px;top:545.00px;font-size:21.2px;color:#1c2430;-webkit-text-stroke:0.3px #1c2430;transform:scaleX(0.9759);">WEEK</div>
<div class="t" id="t47" style="left:741.10px;top:545.00px;font-size:21.2px;color:#33424e;-webkit-text-stroke:0.3px #33424e;transform:scaleX(1.0452);">MONTH</div>
<div class="t" id="t48" style="left:862.50px;top:545.00px;font-size:21.2px;color:#33424e;-webkit-text-stroke:0.3px #33424e;transform:scaleX(1.0157);">3 MONTHS</div>
<div class="t" id="t49" style="left:1013.80px;top:545.00px;font-size:21.2px;color:#33424e;-webkit-text-stroke:0.3px #33424e;transform:scaleX(1.0248);">6 MONTHS</div>
<div class="t" id="t50" style="left:1166.00px;top:545.00px;font-size:21.2px;color:#33424e;-webkit-text-stroke:0.3px #33424e;transform:scaleX(0.9588);">GROUP BY:</div>
<div class="t" id="t51" style="left:1286.30px;top:545.00px;font-size:21.2px;color:#1f74d4;-webkit-text-stroke:0.3px #1f74d4;transform:scaleX(0.9479);">DAYS</div>
<div class="t" id="t52" style="left:2556.00px;top:545.00px;font-size:21.2px;color:#1c2430;-webkit-text-stroke:0.3px #1c2430;transform:scaleX(1.0477);">ALL</div>
<div class="t" id="t53" style="left:2635.00px;top:545.00px;font-size:21.2px;color:#33424e;-webkit-text-stroke:0.3px #33424e;transform:scaleX(0.9644);">WEBSITES</div>
<div class="t" id="t54" style="left:2780.40px;top:545.00px;font-size:21.2px;color:#33424e;-webkit-text-stroke:0.3px #33424e;transform:scaleX(0.9572);">GROUPS</div>
<div class="t" id="t55" style="left:750.40px;top:624.00px;font-size:23.5px;color:#6b8496;transform:scaleX(1.1317);">0</div>
<div class="t" id="t56" style="left:738.60px;top:731.00px;font-size:23.5px;color:#6b8496;transform:scaleX(1.0176);">10</div>
<div class="t" id="t57" style="left:737.40px;top:840.00px;font-size:23.5px;color:#6b8496;transform:scaleX(1.0635);">20</div>
<div class="t" id="t58" style="left:737.40px;top:947.00px;font-size:23.5px;color:#6b8496;transform:scaleX(1.0635);">30</div>
<div class="t" id="t59" style="left:736.40px;top:1056.00px;font-size:23.5px;color:#6b8496;transform:scaleX(1.1017);">40</div>
<div class="t" id="t60" style="left:0;top:0;font-size:21.5px;color:#6b8496;-webkit-text-stroke:0.25px #6b8496;transform:translate(693.6px,974.8px) rotate(-90deg) scaleX(1.0067) translateY(-17px);">AVERAGE POSITION</div>
<div class="t" id="t61" style="left:829.00px;top:1085.00px;font-size:20px;color:#6b8496;transform:scaleX(0.9324);">Jan 10</div>
<div class="t" id="t62" style="left:1848.50px;top:1085.00px;font-size:20px;color:#6b8496;transform:scaleX(0.8740);">Jan 11</div>
<div class="t" id="t63" style="left:664.30px;top:1175.00px;font-size:26.5px;color:#35434f;transform:scaleX(0.9989);">CrazyGames SEO Tracking</div>
<div class="t" id="t64" style="left:1044.90px;top:1175.00px;font-size:26.5px;color:#35434f;transform:scaleX(1.0314);">pandadoc.com</div>
<div class="t" id="t65" style="left:1280.00px;top:1175.00px;font-size:26.5px;color:#35434f;transform:scaleX(1.0760);">trello.com</div>
<div class="t" id="t66" style="left:1458.50px;top:1175.00px;font-size:26.5px;color:#35434f;transform:scaleX(1.0607);">zillow.com</div>
<div class="t" id="t67" style="left:1662.00px;top:1175.00px;font-size:26.5px;color:#35434f;transform:scaleX(1.0243);">brands</div>
<div class="t" id="t68" style="left:637.50px;top:1294.00px;font-size:27px;color:#8b8b8b;transform:scaleX(0.9701);">Search</div>
<div class="t" id="t69" style="left:640.50px;top:1436.00px;font-size:37.5px;color:#2a2f5b;transform:scaleX(1.0630);">Projects</div>
<div class="t" id="t70" style="left:2726.50px;top:1445.00px;font-size:21.5px;color:#1a2030;-webkit-text-stroke:0.3px #1a2030;">COLUMNS</div>
</div></body></html>
